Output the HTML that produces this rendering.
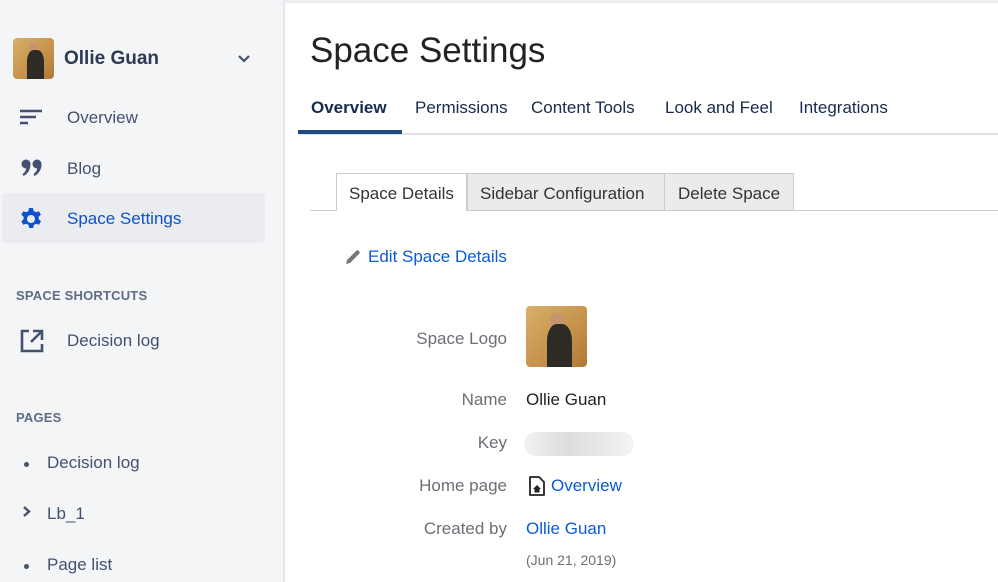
<!DOCTYPE html>
<html><head><meta charset="utf-8"><style>
*{margin:0;padding:0;box-sizing:border-box}
body{width:998px;height:582px;overflow:hidden;background:#fff;font-family:"Liberation Sans",sans-serif;position:relative}
.a{position:absolute;white-space:nowrap}
#sb{position:absolute;left:0;top:0;width:285px;height:582px;background:#f4f5f7;border-right:2px solid #e4e6ea}
.nav{font-size:17px;color:#42526e}
.hd{font-size:13px;color:#5e6c84;font-weight:bold;letter-spacing:.2px}
.photo{background:linear-gradient(135deg,#d9b06a,#c4914a 60%,#b07838);border-radius:4px;overflow:hidden}
.photo:after{content:"";position:absolute;left:35%;top:30%;width:40%;height:70%;background:#2e2a26;border-radius:40% 40% 0 0}
.photo:before{content:"";position:absolute;left:40%;top:12%;width:22%;height:25%;background:#c59571;border-radius:50%}
.tab{font-size:17px;color:#172b4d}
.lab{font-size:17px;color:#6b6f75;text-align:right;width:200px;left:307px}
.val{font-size:17px;color:#222;left:526px}
.lnk{color:#0b5bd3}
</style></head><body>
<div id="sb"></div>
<div class="a" style="left:284px;top:0;width:714px;height:3px;background:#eceef1"></div>
<div class="a photo" style="left:13px;top:38px;width:41px;height:41px"></div>
<div class="a" style="left:64px;top:48px;font-size:19px;font-weight:bold;color:#2b3a55">Ollie Guan</div>
<svg class="a" style="left:237px;top:54px" width="14" height="10"><path d="M2 2l5 5 5-5" stroke="#42526e" stroke-width="2.2" fill="none"/></svg>
<svg class="a" style="left:19px;top:109px" width="24" height="18"><path d="M1 2h22M1 8h16M1 14h8" stroke="#42526e" stroke-width="2.4"/></svg>
<div class="a nav" style="left:67px;top:108px">Overview</div>
<svg class="a" style="left:21px;top:159px" width="22" height="20" viewBox="0 0 22 20"><circle cx="5" cy="5" r="4.5" fill="#42526e"/><path d="M9.5 5c0 6-3 10-7 12l-1-2c3-2 4-5 4-8z" fill="#42526e"/><circle cx="16" cy="5" r="4.5" fill="#42526e"/><path d="M20.5 5c0 6-3 10-7 12l-1-2c3-2 4-5 4-8z" fill="#42526e"/></svg>
<div class="a nav" style="left:67px;top:159px">Blog</div>
<div class="a" style="left:2px;top:193px;width:263px;height:50px;background:#ebecf0;border-radius:4px"></div>
<svg class="a" style="left:19px;top:207px" width="24" height="24" viewBox="0 0 24 24"><path fill="#0b52cc" fill-rule="evenodd" d="M10 1h4l.6 3 2.4 1.3 2.9-1 2 3.4-2.3 2 .1 2.6 2.3 2-2 3.4-2.9-1-2.3 1.3-.6 3h-4l-.6-3-2.4-1.3-2.9 1-2-3.4 2.3-2V9.7l-2.3-2 2-3.4 2.9 1L9.4 4zM12 8a4 4 0 100 8 4 4 0 000-8z"/></svg>
<div class="a nav" style="left:67px;top:209px;color:#0b52cc">Space Settings</div>
<div class="a hd" style="left:16px;top:288px">SPACE SHORTCUTS</div>
<svg class="a" style="left:19px;top:328px" width="26" height="26"><path d="M10 3H3v20h20v-7" stroke="#42526e" stroke-width="2.6" fill="none"/><path d="M14 3h9v9M23 3L12 14" stroke="#42526e" stroke-width="2.6" fill="none"/></svg>
<div class="a nav" style="left:67px;top:331px">Decision log</div>
<div class="a hd" style="left:16px;top:410px">PAGES</div>
<div class="a" style="left:24px;top:462px;width:5px;height:5px;border-radius:50%;background:#42526e"></div>
<div class="a nav" style="left:47px;top:453px">Decision log</div>
<svg class="a" style="left:22px;top:506px" width="10" height="12"><path d="M2 1l5 4.5L2 10" stroke="#42526e" stroke-width="2.4" fill="none"/></svg>
<div class="a nav" style="left:47px;top:504px">Lb_1</div>
<div class="a" style="left:24px;top:564px;width:5px;height:5px;border-radius:50%;background:#42526e"></div>
<div class="a nav" style="left:47px;top:555px">Page list</div>

<div class="a" style="left:310px;top:31px;font-size:35px;color:#222">Space Settings</div>
<div class="a" style="left:298px;top:133px;width:700px;height:2px;background:#dfe1e6"></div>
<div class="a" style="left:298px;top:130px;width:104px;height:4px;background:#1f4c80"></div>
<div class="a tab" style="left:311px;top:98px;font-weight:bold">Overview</div>
<div class="a tab" style="left:415px;top:98px">Permissions</div>
<div class="a tab" style="left:531px;top:98px">Content Tools</div>
<div class="a tab" style="left:665px;top:98px">Look and Feel</div>
<div class="a tab" style="left:799px;top:98px">Integrations</div>

<div class="a" style="left:310px;top:210px;width:688px;height:1px;background:#ccc"></div>
<div class="a" style="left:336px;top:173px;width:131px;height:38px;background:#fff;border:1px solid #ccc;border-bottom:none"></div>
<div class="a" style="left:467px;top:173px;width:198px;height:38px;background:#ebebeb;border:1px solid #ccc"></div>
<div class="a" style="left:664px;top:173px;width:130px;height:38px;background:#ebebeb;border:1px solid #ccc"></div>
<div class="a tab" style="left:349px;top:184px;color:#333">Space Details</div>
<div class="a tab" style="left:480px;top:184px;color:#333">Sidebar Configuration</div>
<div class="a tab" style="left:678px;top:184px;color:#333">Delete Space</div>

<svg class="a" style="left:344px;top:249px" width="18" height="17"><path d="M2 15l1-4 9-9a2 2 0 013 3l-9 9z" fill="#777"/></svg>
<div class="a lnk" style="left:368px;top:247px;font-size:17px">Edit Space Details</div>

<div class="a lab" style="top:329px">Space Logo</div>
<div class="a photo" style="left:526px;top:306px;width:61px;height:61px"></div>
<div class="a lab" style="top:390px">Name</div>
<div class="a val" style="top:390px">Ollie Guan</div>
<div class="a lab" style="top:433px">Key</div>
<div class="a" style="left:524px;top:432px;width:110px;height:24px;border-radius:12px;background:linear-gradient(90deg,#f2f2f2,#ddd 40%,#e8e8e8 70%,#f4f4f4)"></div>
<div class="a lab" style="top:476px">Home page</div>
<svg class="a" style="left:528px;top:475px" width="18" height="22"><path d="M2 2h9l5 5v13H2z" fill="#fff" stroke="#222" stroke-width="1.8" stroke-linejoin="round"/><path d="M9 10l-4 4h1.5v3.5h5V14H13z" fill="#222"/></svg>
<div class="a val lnk" style="left:551px;top:476px">Overview</div>
<div class="a lab" style="top:519px">Created by</div>
<div class="a val lnk" style="top:519px">Ollie Guan</div>
<div class="a" style="left:526px;top:552px;font-size:14px;color:#6b6f75">(Jun 21, 2019)</div>
</body></html>
